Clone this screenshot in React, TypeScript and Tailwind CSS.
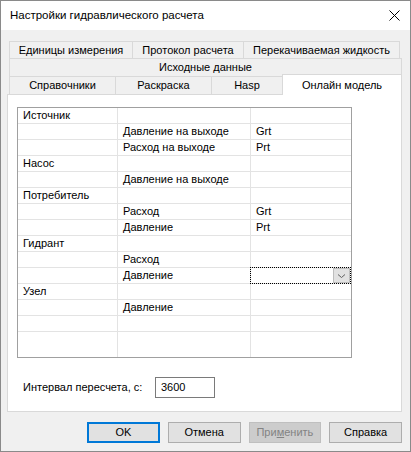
import React from "react";

const rows: [string, string, string][] = [
  ["Источник", "", ""],
  ["", "Давление на выходе", "Grt"],
  ["", "Расход на выходе", "Prt"],
  ["Насос", "", ""],
  ["", "Давление на выходе", ""],
  ["Потребитель", "", ""],
  ["", "Расход", "Grt"],
  ["", "Давление", "Prt"],
  ["Гидрант", "", ""],
  ["", "Расход", ""],
  ["", "Давление", "__dd"],
  ["Узел", "", ""],
  ["", "Давление", ""],
  ["", "", ""],
];

function Cell({ text, last }: { text: string; last?: boolean }) {
  if (text === "__dd") {
    return (
      <div className="relative h-full">
        <div className="absolute left-[-1px] top-[-1px] right-0 bottom-[-1px] border border-dotted border-black z-10 flex justify-end items-stretch p-[0px]">
          <div className="w-[17px] bg-[#e1e1e1] border border-[#bdbdbd] flex items-center justify-center">
            <svg width="9" height="6" viewBox="0 0 9 6">
              <path d="M1 1.5 L4.5 4.5 L8 1.5" fill="none" stroke="#606060" strokeWidth="1" />
            </svg>
          </div>
        </div>
      </div>
    );
  }
  return (
    <div className={`h-full pl-[5px] leading-[15px] whitespace-nowrap overflow-hidden ${last ? "" : "border-r border-[#e3e3e3]"}`}>
      {text}
    </div>
  );
}

export default function App() {
  return (
    <div className="w-[411px] h-[452px] border border-[#8a8a8a] bg-[#f0f0f0] flex flex-col text-[11px] text-black font-['Liberation_Sans',Arial,sans-serif]">
      {/* title bar */}
      <div className="h-[29px] bg-white flex items-center justify-between pl-[9px] pr-[9px] shrink-0">
        <span className="text-[11.5px]">Настройки гидравлического расчета</span>
        <svg width="11" height="11" viewBox="0 0 11 11" className="mr-[1px]">
          <path d="M0.5 0.5 L10.5 10.5 M10.5 0.5 L0.5 10.5" stroke="#000" strokeWidth="1" />
        </svg>
      </div>

      {/* body */}
      <div className="flex-1 flex flex-col pl-[6px] pr-[8px] pt-[11px]">
        {/* tabs */}
        <div className="ml-[2px] flex flex-col">
          <div className="flex h-[17px]">
            <div className="w-[123px] border-l border-t border-[#d9d9d9] flex items-center justify-center">Единицы измерения</div>
            <div className="w-[111px] border-l border-t border-[#d9d9d9] flex items-center justify-center">Протокол расчета</div>
            <div className="w-[157px] border-l border-t border-r border-[#d9d9d9] flex items-center justify-center">Перекачиваемая жидкость</div>
          </div>
          <div className="h-[18px] w-[393px] border-l border-t border-r border-[#d9d9d9] flex items-center justify-center">
            Исходные данные
          </div>
          <div className="flex h-[18px] items-start">
            <div className="w-[106px] h-[18px] border-l border-t border-[#d9d9d9] flex items-center justify-center">Справочники</div>
            <div className="w-[96px] h-[18px] border-l border-t border-[#d9d9d9] flex items-center justify-center">Раскраска</div>
            <div className="w-[71px] h-[18px] border-l border-t border-[#d9d9d9] flex items-center justify-center">Hasp</div>
            <div className="relative z-10 w-[120px] h-[21px] -mt-[2px] bg-white border-l border-t border-r border-[#d9d9d9] flex items-start justify-center pt-[2px]">
              Онлайн модель
            </div>
          </div>
        </div>

        {/* panel */}
        <div className="w-[395px] h-[318px] bg-white border border-[#d9d9d9] flex flex-col">
          <div className="ml-[9px] mt-[12px] w-[335px] h-[251px] border border-[#a0a0a0] flex flex-col">
            {rows.map((r, i) => (
              <div key={i} className="grid grid-cols-[100px_133px_1fr] h-[16px] border-b border-[#e3e3e3] shrink-0">
                <Cell text={r[0]} />
                <Cell text={r[1]} />
                <Cell text={r[2]} last />
              </div>
            ))}
            <div className="grid grid-cols-[100px_133px_1fr] flex-1">
              <div className="border-r border-[#e3e3e3]" />
              <div className="border-r border-[#e3e3e3]" />
              <div />
            </div>
          </div>

          <div className="mt-[19px] flex items-center pl-[15px]">
            <span className="w-[132px]">Интервал пересчета, с:</span>
            <div className="w-[60px] h-[21px] border border-[#7a7a7a] flex items-center pl-[5px]">3600</div>
          </div>
        </div>

        {/* buttons */}
        <div className="mt-[10px] flex gap-[8px] pl-[80px]">
          <div className="w-[73px] h-[21px] bg-[#e1e1e1] border-2 border-[#0078d7] flex items-center justify-center">OK</div>
          <div className="w-[73px] h-[21px] bg-[#e1e1e1] border border-[#adadad] flex items-center justify-center">Отмена</div>
          <div className="w-[73px] h-[21px] bg-[#cccccc] border border-[#bfbfbf] text-[#838383] flex items-center justify-center">
            При<span className="underline">м</span>енить
          </div>
          <div className="w-[73px] h-[21px] bg-[#e1e1e1] border border-[#adadad] flex items-center justify-center">Справка</div>
        </div>
      </div>
    </div>
  );
}
